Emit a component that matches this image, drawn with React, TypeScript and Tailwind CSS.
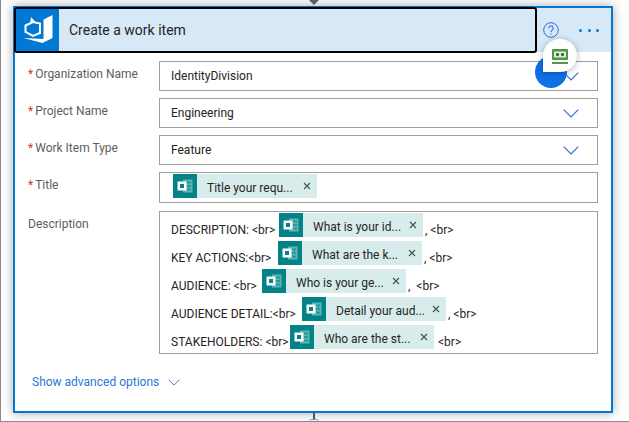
const fontStack = "font-['Roboto',sans-serif]"

function FormsIcon() {
  return (
    <div className="flex h-6 w-6 shrink-0 items-center justify-center bg-[#038387]">
      <svg width="16" height="14" viewBox="0 0 16 14">
        <rect x="6" y="0.5" width="9.5" height="13" fill="#5fb4b6" />
        <rect x="10" y="2.5" width="4" height="2" fill="#038387" opacity="0.6" />
        <rect x="10" y="6" width="4" height="2" fill="#038387" opacity="0.6" />
        <rect x="10" y="9.5" width="4" height="2" fill="#038387" opacity="0.6" />
        <rect x="0.5" y="2.5" width="9" height="9" rx="0.5" fill="#ffffff" />
        <rect x="3" y="5" width="4" height="4" fill="#038387" />
      </svg>
    </div>
  )
}

function Chip({ label }: { label: string }) {
  return (
    <div className="flex h-6 w-36 shrink-0 items-center bg-[#d9ecec]">
      <FormsIcon />
      <span className="ml-2.5 flex-1 pt-[3px] text-xs whitespace-nowrap text-[#252423]">{label}</span>
      <svg width="8" height="8" viewBox="0 0 8 8" className="mr-[6px]">
        <path d="M1 1l6 6M7 1L1 7" stroke="#3b5a5c" strokeWidth="1.2" fill="none" />
      </svg>
    </div>
  )
}

function Chevron({ className = "" }: { className?: string }) {
  return (
    <svg width="16" height="9" viewBox="0 0 16 9" className={className}>
      <path d="M0.7 0.7L8 8l7.3-7.3" stroke="#2f6fe0" strokeWidth="1.2" fill="none" />
    </svg>
  )
}

function Label({ text, required = true }: { text: string; required?: boolean }) {
  return (
    <div className="w-[144px] shrink-0 pt-[4px] pl-[13px] text-xs leading-[18px] whitespace-nowrap text-[#605e5c]">
      {required && <span className="mr-[2px] text-[#d13438]">*</span>}
      {text}
    </div>
  )
}

function SelectRow({ label, value }: { label: string; value: string }) {
  return (
    <div className="flex items-start">
      <Label text={label} />
      <div className="flex h-[30px] w-[439px] items-center justify-between border border-[#a19f9d] pr-[18px] pl-[11px]">
        <span className="text-xs text-[#252423]">{value}</span>
        <Chevron />
      </div>
    </div>
  )
}

const descriptionRows = [
  { prefix: "DESCRIPTION: <br>", width: "w-[108px]", chip: "What is your id...", after: ", <br>", afterClass: "ml-[2px]" },
  { prefix: "KEY ACTIONS:<br>", width: "w-[107px]", chip: "What are the k...", after: ", <br>", afterClass: "ml-[2px]" },
  { prefix: "AUDIENCE: <br>", width: "w-[91px]", chip: "Who is your ge...", after: ",  <br>", afterClass: "ml-[2px] whitespace-pre" },
  { prefix: "AUDIENCE DETAIL:<br>", width: "w-[131px]", chip: "Detail your aud...", after: ", <br>", afterClass: "ml-[2px]" },
  { prefix: "STAKEHOLDERS: <br>", width: "w-[119px]", chip: "Who are the st...", after: "<br>", afterClass: "ml-[4px]" },
]

export default function App() {
  return (
    <div className={`relative h-[422px] w-[629px] overflow-hidden border-b border-l border-[#8a8a8a] bg-white ${fontStack}`}>
      <div className="absolute top-0 left-[308px] z-10 h-0 w-0 border-x-[5px] border-t-[5px] border-x-transparent border-t-[#605e5c]" />

      <div className="mt-[6px] ml-[12px] h-[407px] w-[600px] border-2 border-[#0078d4] bg-white shadow-[0_0_10px_rgba(0,0,0,0.35)]">
        <div className="flex h-[44px] bg-[#d7e8f7]">
          <div className="-mt-px -ml-[1px] flex h-[46px] w-[523px] items-center rounded-[3px] border-2 border-black">
            <div className="flex h-full w-[43px] items-center justify-center bg-[#0078d4]">
              <svg width="30" height="32" viewBox="0 0 30 32">
                <path d="M29.500 1V24L19.500 29 0.500 24 20.500 25V5.500z" fill="#ffffff" />
                <path d="M2.500 11.500L10 8l7 1.500V19l-7 3-7.500-4z" fill="none" stroke="#ffffff" strokeWidth="2" />
                <path d="M8 3l4.500 5L7 9.500z" fill="#ffffff" />
              </svg>
            </div>
            <span className="ml-[10px] text-sm text-[#252423]">Create a work item</span>
          </div>
          <div className="flex flex-1 items-center pl-[6px]">
            <svg width="16" height="16" viewBox="0 0 16 16">
              <circle cx="8" cy="8" r="7.3" fill="none" stroke="#2f6fe0" strokeWidth="1" />
              <path d="M5.800 6.200a2.200 2.200 0 1 1 3.400 1.900C8.400 8.600 8 9 8 10" fill="none" stroke="#2f6fe0" strokeWidth="1.1" />
              <circle cx="8" cy="12" r="0.7" fill="#2f6fe0" />
            </svg>
            <div className="ml-[20px] flex gap-[5.5px]">
              <span className="h-[3px] w-[3px] rounded-full bg-[#0078d4]" />
              <span className="h-[3px] w-[3px] rounded-full bg-[#0078d4]" />
              <span className="h-[3px] w-[3px] rounded-full bg-[#0078d4]" />
            </div>
          </div>
        </div>

        <div className="flex flex-col gap-[7px] pt-[9px]">
          <SelectRow label="Organization Name" value="IdentityDivision" />
          <SelectRow label="Project Name" value="Engineering" />
          <SelectRow label="Work Item Type" value="Feature" />

          <div className="flex items-start">
            <Label text="Title" />
            <div className="flex h-[31px] w-[439px] items-start border border-[#a19f9d] pt-px pl-[13px]">
              <Chip label="Title your requ..." />
            </div>
          </div>

          <div className="mt-px flex items-start">
            <Label text="Description" required={false} />
            <div className="flex h-[143px] w-[439px] flex-col gap-1 border border-[#a19f9d] pt-px pl-[11px] text-xs text-[#252423]">
              {descriptionRows.map((row) => (
                <div key={row.prefix} className="flex h-6 items-start">
                  <span className={`${row.width} mt-[8px] shrink-0 leading-[18px] whitespace-nowrap`}>{row.prefix}</span>
                  <Chip label={row.chip} />
                  <span className={`${row.afterClass} mt-[8px] leading-[18px]`}>{row.after}</span>
                </div>
              ))}
            </div>
          </div>

          <div className="mt-[13px] flex items-center pl-[17px]">
            <span className="text-xs text-[#2b78d6]">Show advanced options</span>
            <Chevron className="ml-[9px] h-[7px] w-[12px]" />
          </div>
        </div>
      </div>

      <div className="absolute top-[413px] left-[312px] h-[7px] w-0.5 bg-[#555555]" />
      <div className="absolute top-[419px] left-[308px] h-[3px] w-[10px] rounded-t-full border-t border-[#4a9de0]" />

      <div className="absolute top-[56px] left-[534px] h-8 w-8 rounded-full bg-[#0f6fe8]" />
      <div className="absolute top-[39px] left-[542px] flex h-[33px] w-[34px] flex-col items-center justify-center gap-[2px] rounded-t-full rounded-br-full bg-white pt-px shadow-[0_1px_6px_rgba(0,0,0,0.3)]">
        <svg width="16" height="15" viewBox="0 0 16 15">
          <rect x="0" y="0" width="16" height="11" rx="1" fill="#4c9a3f" />
          <rect x="2" y="2.500" width="12" height="6" fill="#dcebd8" />
          <circle cx="5.500" cy="5.500" r="1.500" fill="#3a4a3a" />
          <circle cx="10.500" cy="5.500" r="1.500" fill="#3a4a3a" />
          <rect x="0" y="13" width="16" height="2" fill="#4c9a3f" />
        </svg>
      </div>
    </div>
  )
}
